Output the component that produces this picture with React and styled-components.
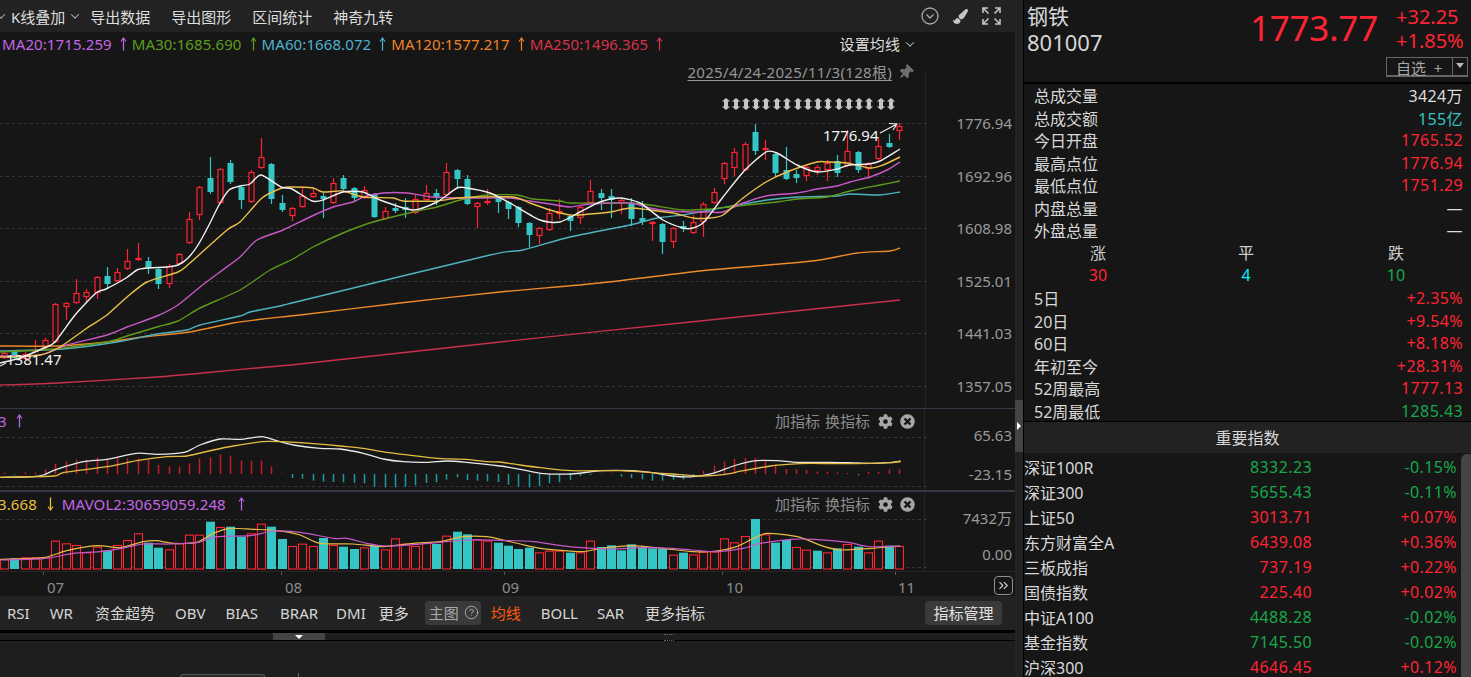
import React from 'react';
import styled, { createGlobalStyle } from 'styled-components';
import { FaCog, FaTimesCircle, FaThumbtack, FaPaintBrush } from 'react-icons/fa';
import { CircleHelp, ChevronsRight } from 'lucide-react';

const RED = '#ff2433';
const GREEN = '#16a84a';
const TEAL = '#35c5c5';
const PANEL = '#161616';
const BAR = '#222222';
const FONT = '"Noto Sans", "Noto Sans CJK SC", sans-serif';

const GlobalStyle = createGlobalStyle`
  html, body { margin: 0; padding: 0; background: ${PANEL}; overflow: hidden; }
  body { font-family: ${FONT}; }
  svg text { font-family: ${FONT}; }
`;

/* ---------- data ---------- */
const barX = (i) => Math.round(4 + i * 10.285);

// [top, bottom, high, low, kind]
const candles = [
  [353,358,352,359,'r'],[352,358,350,359,'t'],[354,359,352,360,'r'],[350,352,340,352,'r'],[340,348,338,349,'r'],
  [304,342,303,343,'r'],[303,307,302,320,'r'],[293,303,279,304,'r'],[292,297,289,303,'r'],[277,293,276,299,'r'],
  [276,284,267,288,'t'],[272,281,268,282,'r'],[261,269,249,270,'r'],[258,260,243,261,'r'],[261,268,257,274,'t'],
  [269,284,268,289,'t'],[266,284,264,288,'r'],[254,264,253,265,'r'],[219,243,212,244,'r'],[187,215,186,220,'r'],
  [178,192,157,194,'t'],[169,203,168,204,'r'],[163,182,160,184,'t'],[187,200,186,209,'t'],[172,202,170,203,'r'],
  [157,168,138,169,'r'],[164,199,163,204,'t'],[203,210,195,212,'t'],[208,216,207,221,'r'],[196,207,188,208,'r'],
  [193,197,187,198,'r'],[196,199,193,218,'t'],[183,203,178,204,'r'],[178,189,175,190,'t'],[188,198,187,202,'t'],
  [190,198,186,199,'r'],[194,217,193,218,'t'],[211,219,207,220,'r'],[208,211,203,213,'t'],[207,210,198,218,'t'],
  [199,213,195,214,'r'],[193,200,185,201,'r'],[193,198,189,205,'t'],[172,195,163,196,'r'],[170,179,169,188,'t'],
  [179,204,175,205,'t'],[203,207,202,228,'r'],[201,203,189,205,'r'],[197,202,196,213,'t'],[202,209,201,219,'t'],
  [207,223,206,227,'t'],[223,235,222,247,'t'],[228,236,227,244,'r'],[213,230,208,231,'r'],[211,214,199,219,'r'],
  [216,221,215,231,'t'],[207,218,206,224,'r'],[191,203,180,204,'r'],[193,198,189,210,'t'],[196,200,189,218,'t'],
  [200,203,197,214,'r'],[203,219,198,226,'t'],[218,222,201,225,'t'],[222,224,221,241,'r'],[224,242,223,254,'t'],
  [228,242,227,248,'r'],[226,229,221,232,'t'],[222,233,215,234,'r'],[204,222,202,237,'r'],[192,203,188,204,'r'],
  [163,179,162,184,'r'],[152,168,148,176,'r'],[144,170,142,171,'r'],[132,151,124,155,'t'],[148,150,140,160,'r'],
  [154,173,153,176,'t'],[170,179,147,180,'t'],[174,178,170,183,'t'],[167,176,166,181,'r'],[167,171,165,175,'r'],
  [163,170,160,181,'r'],[161,173,155,177,'t'],[151,166,130,167,'r'],[152,170,151,173,'t'],[163,169,162,179,'r'],
  [146,159,137,160,'r'],[143,147,134,148,'t'],[126,131,123,140,'r'],
];

const maLines = [
  { color: '#ed8a2a', points: [[0,346],[57,346],[107,342],[143,337],[190,332],[233,323],[263,319],[300,315],[400,303],[500,292],[600,283],[700,271],[780,264],[820,260],[857,253],[890,251],[900,248]] },
  { color: '#c8304c', points: [[0,385],[57,383],[157,377],[213,372],[267,367],[300,364],[500,342],[700,321],[900,300]] },
  { color: '#4fb3bf', points: [[0,351],[63,349],[117,342],[157,334],[187,330],[200,325],[240,316],[250,312],[280,306],[300,301],[490,255],[523,250],[570,237],[630,225],[657,218],[683,215],[700,212],[737,205],[767,200],[797,197],[837,196],[850,194],[880,195],[900,192]] },
  { color: '#5f9a1a', points: [[0,352],[40,350],[63,348],[107,342],[127,336],[157,327],[178,321],[200,308],[240,290],[270,270],[293,259],[313,247],[343,233],[373,222],[413,212],[437,207],[460,200],[487,195],[517,195],[533,199],[560,201],[570,203],[610,203],[630,203],[650,205],[683,210],[710,209],[737,206],[777,202],[797,199],[827,197],[850,191],[880,185],[900,181]] },
  { color: '#c858c8', points: [[0,356],[40,355],[67,345],[107,335],[127,327],[157,316],[178,305],[200,287],[220,272],[240,257],[257,240],[283,230],[310,217],[333,207],[353,202],[363,197],[383,193],[407,193],[433,197],[467,198],[510,198],[530,201],[550,204],[570,207],[590,204],[630,203],[650,208],[670,211],[690,212],[710,212],[723,212],[743,203],[766,196],[797,193],[817,189],[837,186],[850,182],[870,177],[887,170],[900,162]] },
  { color: '#eec04a', points: [[0,357],[40,355],[60,347],[87,328],[107,315],[127,297],[147,282],[178,272],[190,263],[227,230],[240,222],[262,198],[282,188],[292,187],[313,188],[323,192],[343,191],[363,197],[393,198],[403,201],[437,201],[457,198],[477,197],[513,197],[530,203],[550,210],[570,215],[590,214],[610,212],[630,208],[650,210],[673,213],[693,218],[710,218],[723,215],[743,198],[766,182],[787,172],[817,162],[827,162],[847,163],[870,168],[883,165],[900,157]] },
  { color: '#f0f0f0', points: [[0,363],[20,358],[44,348],[55,342],[75,315],[96,293],[106,289],[126,278],[137,270],[147,268],[167,267],[178,265],[188,258],[198,245],[209,225],[219,205],[229,190],[240,186],[250,184],[261,175],[281,187],[292,189],[312,201],[323,200],[343,192],[363,192],[380,200],[413,210],[437,202],[457,188],[467,188],[490,193],[510,203],[540,220],[560,222],[580,212],[600,202],[620,198],[640,203],[663,220],[683,228],[693,228],[704,222],[723,197],[745,170],[766,152],[777,153],[797,165],[817,172],[837,169],[849,165],[869,164],[880,161],[900,149]] },
];

const macdHeights = [4,-2,5,4,14,30,37,43,43,50,46,47,47,47,42,27,23,22,32,47,50,58,55,40,40,40,22,2,-12,-14,-20,-23,-24,-25,-26,-28,-38,-40,-40,-38,-34,-27,-25,-17,-10,-18,-20,-22,-24,-32,-38,-40,-36,-28,-25,-18,-6,-3,2,2,-8,-12,-16,-20,-20,-17,-16,-4,10,25,38,45,48,48,40,28,15,14,12,7,6,5,3,-4,6,6,14,14].slice(0, 88);

const fromZoom5 = (list) => list.map(([x, y]) => [x / 3, 400 + y / 3]);
const fromZoom6 = (list) => list.map(([x, y]) => [500 + x / 2.958, 400 + y / 3]);

const macdWhite = [...fromZoom5([[0,232],[100,230],[130,225],[170,208],[250,185],[320,178],[410,160],[470,163],[530,160],[560,155],[600,135],[660,117],[720,118],[785,110],[830,122],[880,135],[960,145],[1020,147],[1090,160],[1150,177],[1210,185],[1280,187],[1340,183],[1400,187]]),
  ...fromZoom6([[0,198],[60,208],[120,220],[210,222],[300,212],[390,212],[450,218],[510,228],[570,230],[630,220],[700,195],[760,182],[820,182],[880,187],[970,187],[1030,188],[1100,190],[1150,188],[1185,183]])];
const macdYellow = [...fromZoom5([[0,232],[160,228],[190,218],[320,200],[410,182],[500,170],[560,168],[640,150],[700,138],[785,125],[840,125],[940,131],[1020,138],[1090,145],[1160,157],[1240,167],[1310,175],[1400,178],[1460,185]]),
  ...fromZoom6([[0,186],[60,195],[120,203],[210,212],[300,212],[360,212],[450,218],[510,222],[590,228],[660,224],[720,212],[800,198],[850,193],[920,190],[1000,191],[1100,190],[1150,188],[1185,185]])];

const volBars = [
  [477,'r'],[475,'t'],[472,'r'],[472,'r'],[472,'r'],[422,'r'],[430,'r'],[435,'r'],[457,'r'],[440,'r'],[452,'t'],[435,'r'],[420,'r'],[400,'r'],[428,'t'],[443,'t'],[448,'r'],[430,'r'],[404,'r'],[404,'r'],
  [365,'t'],[381,'r'],[380,'t'],[410,'t'],[400,'r'],[371,'r'],[380,'t'],[417,'t'],[438,'r'],[431,'r'],[438,'r'],[414,'t'],[435,'r'],[440,'t'],[447,'t'],[442,'r'],[435,'t'],[448,'r'],[415,'r'],[431,'r'],
  [438,'r'],[427,'r'],[432,'t'],[407,'r'],[395,'t'],[403,'t'],[418,'r'],[422,'r'],[428,'t'],
  [437,'t'],[447,'t'],[443,'t'],[457,'r'],[452,'r'],[452,'r'],[458,'t'],[457,'r'],[422,'r'],[441,'t'],[436,'t'],[451,'t'],[433,'t'],[441,'t'],[445,'t'],[446,'t'],[464,'r'],[458,'t'],[463,'r'],[455,'r'],
  [455,'r'],[415,'r'],[427,'r'],[408,'r'],[357,'t'],[403,'r'],[428,'t'],[420,'t'],[441,'r'],[449,'r'],[452,'t'],[457,'r'],[445,'t'],[432,'r'],[440,'t'],[457,'r'],[422,'r'],[437,'t'],[438,'r'],
];

const volYellow = [...fromZoom5([[0,478],[130,473],[200,452],[290,437],[360,443],[430,425],[470,422],[520,430],[590,427],[640,400],[690,385],[760,388],[830,392],[900,405],[960,430],[1060,432],[1150,440],[1240,430],[1320,425],[1390,410],[1460,410]]),
  ...fromZoom6([[0,418],[60,432],[120,445],[240,455],[300,445],[390,437],[480,445],[570,455],[640,453],[700,440],[750,415],[790,400],[880,410],[960,440],[1010,450],[1100,445],[1184,438]])];
const volMagenta = [...fromZoom5([[0,480],[130,476],[220,460],[300,455],[380,442],[430,432],[510,432],[590,428],[650,410],[750,407],[820,393],[900,397],[1000,415],[1040,415],[1100,430],[1160,438],[1250,433],[1340,425],[1400,420]]),
  ...fromZoom6([[0,421],[100,425],[180,437],[240,443],[330,447],[420,443],[510,445],[570,450],[640,455],[720,445],[770,430],[860,418],[930,418],[1030,427],[1090,440],[1184,438]])];

const signalXs = [726,736,746,756,766,777,787,798,808,818,828,839,849,859,869,881,891];
const mainGrid = [
  { y: 123.5, label: '1776.94' }, { y: 176.5, label: '1692.96' }, { y: 228.5, label: '1608.98' },
  { y: 281.5, label: '1525.01' }, { y: 333.5, label: '1441.03' }, { y: 386.5, label: '1357.05' },
];
const maItems = [
  { text: 'MA20:1715.259', color: '#c466e6' },
  { text: 'MA30:1685.690', color: '#5c9e1c' },
  { text: 'MA60:1668.072', color: '#4fb0cf' },
  { text: 'MA120:1577.217', color: '#ef8226' },
  { text: 'MA250:1496.365', color: '#d8324a' },
];
const menu = ['导出数据', '导出图形', '区间统计', '神奇九转'];
const tabsA = [['RSI', 20], ['WR', 22], ['资金超势', 20], ['OBV', 20], ['BIAS', 22], ['BRAR', 18], ['DMI', 13], ['更多', 16]];
const tabsB = [['BOLL', 19], ['SAR', 21], ['更多指标', 0]];
const axisLabels = [['07', 47], ['08', 285], ['09', 502], ['10', 726], ['11', 898]];
const statsA = [
  ['总成交量', '3424万', '#dddddd'], ['总成交额', '155亿', TEAL], ['今日开盘', '1765.52', RED],
  ['最高点位', '1776.94', RED], ['最低点位', '1751.29', RED], ['内盘总量', '—', '#dddddd'], ['外盘总量', '—', '#dddddd'],
];
const statsB = [
  ['5日', '+2.35%', RED], ['20日', '+9.54%', RED], ['60日', '+8.18%', RED], ['年初至今', '+28.31%', RED],
  ['52周最高', '1777.13', RED], ['52周最低', '1285.43', GREEN],
];
const breadth = [['涨', '30', RED], ['平', '4', '#00f0ff'], ['跌', '10', GREEN]];
const indices = [
  ['深证100R', '8332.23', '-0.15%', GREEN], ['深证300', '5655.43', '-0.11%', GREEN], ['上证50', '3013.71', '+0.07%', RED],
  ['东方财富全A', '6439.08', '+0.36%', RED], ['三板成指', '737.19', '+0.22%', RED], ['国债指数', '225.40', '+0.02%', RED],
  ['中证A100', '4488.28', '-0.02%', GREEN], ['基金指数', '7145.50', '-0.02%', GREEN], ['沪深300', '4646.45', '+0.12%', RED],
];

/* ---------- styled parts ---------- */
const Page = styled.div`
  display: flex;
  width: 1471px;
  height: 677px;
  overflow: hidden;
  background: ${PANEL};
`;
const ChartColumn = styled.div`
  display: flex;
  flex-direction: column;
  width: 1015px;
  flex: none;
  background: ${PANEL};
`;
const Toolbar = styled.div`
  display: flex;
  align-items: center;
  height: 32px;
  flex: none;
  padding: 0 14px 0 0;
  background: ${BAR};
  color: #dddddd;
  font-size: 15px;
`;
const Caret = styled.span`
  display: inline-block;
  width: 5px;
  height: 5px;
  margin: ${(p) => p.$margin || '0'};
  border-right: 1.3px solid #b5b5b5;
  border-bottom: 1.3px solid #b5b5b5;
  transform: rotate(45deg) translate(-1px, -1px);
`;
const MenuItem = styled.span`
  margin-right: 21px;
  white-space: nowrap;
`;
const ToolIcons = styled.div`
  display: flex;
  align-items: center;
  gap: 14px;
  margin-left: auto;
  color: #a8a8a8;
`;
const MaRow = styled.div`
  display: flex;
  align-items: center;
  height: 26px;
  flex: none;
  box-sizing: border-box;
  padding: 0 102px 3px 2px;
  font-size: 15px;
  letter-spacing: 0.1px;
`;
const MaItem = styled.span`
  display: inline-flex;
  align-items: center;
  margin-right: 2.5px;
  color: ${(p) => p.$color};
  white-space: nowrap;
`;
const MaArrow = styled.svg`
  display: block;
  width: 7px;
  height: 14px;
  margin: 0 ${(p) => p.$gap || '2.5px'} 0 ${(p) => p.$lead || '8px'};
  flex: none;
`;
const SetMa = styled.span`
  display: inline-flex;
  align-items: center;
  margin-left: auto;
  color: #dddddd;
  white-space: nowrap;
`;
const PlotArea = styled.div`
  position: relative;
  height: ${(p) => p.$h}px;
  flex: none;
  border-top: ${(p) => p.$border || '0'};
  box-sizing: border-box;
`;
const PlotSvg = styled.svg`
  display: block;
  position: absolute;
  left: 0;
  top: 0;
`;
const DateRange = styled.div`
  position: absolute;
  right: 102px;
  top: 5px;
  display: flex;
  align-items: center;
  gap: 6px;
  color: #959595;
  font-size: 15px;
  line-height: 19px;
`;
const DateText = styled.span`
  text-decoration: underline;
  text-underline-offset: 2px;
  letter-spacing: 0.3px;
`;
const PanelTools = styled.div`
  position: absolute;
  right: 100px;
  top: ${(p) => p.$top}px;
  display: flex;
  align-items: center;
  color: #8c8c8c;
  font-size: 15px;
  line-height: 18px;
`;
const ToolLabel = styled.span`
  margin-right: 5px;
`;
const ToolGlyph = styled.span`
  display: inline-flex;
  margin-left: ${(p) => p.$gap || 0}px;
  color: #a6a6a6;
`;
const PanelLegend = styled.div`
  position: absolute;
  left: ${(p) => p.$left || 0}px;
  top: ${(p) => p.$top}px;
  display: flex;
  align-items: center;
  font-size: 15px;
  line-height: 18px;
  letter-spacing: 0.1px;
  white-space: nowrap;
`;
const LegendText = styled.span`
  color: ${(p) => p.$color};
`;
const AxisBar = styled.div`
  position: relative;
  height: 25px;
  flex: none;
  border-top: 1px solid #262626;
  box-sizing: border-box;
`;
const AxisTick = styled.span`
  position: absolute;
  left: ${(p) => p.$x}px;
  top: 0;
  width: 1px;
  height: 3px;
  background: #555;
`;
const AxisLabel = styled.span`
  position: absolute;
  left: ${(p) => p.$x}px;
  top: 6px;
  color: #8c8c8c;
  font-size: 15px;
  line-height: 18px;
`;
const ExpandButton = styled.div`
  position: absolute;
  right: 2px;
  top: 4px;
  width: 19px;
  height: 19px;
  display: flex;
  align-items: center;
  justify-content: center;
  border: 1.5px solid #8f8f8f;
  border-radius: 4px;
  box-sizing: border-box;
  color: #d0d0d0;
`;
const Tabs = styled.div`
  display: flex;
  align-items: center;
  height: 34px;
  flex: none;
  box-sizing: border-box;
  padding: 0 13px 1px 7px;
  background: ${BAR};
  color: #d6d6d6;
  font-size: 15px;
`;
const Tab = styled.span`
  margin-right: ${(p) => p.$gap ?? 20}px;
  color: ${(p) => p.$color || 'inherit'};
  white-space: nowrap;
`;
const ChipGroup = styled.span`
  display: inline-flex;
  align-items: center;
  gap: 5px;
  height: 24px;
  padding: 0 2px 0 4px;
  margin: 0 10px 0 0;
  border-radius: 4px;
  background: #3a3a3a;
  color: #a9a9a9;
`;
const ManageButton = styled.span`
  display: inline-flex;
  align-items: center;
  justify-content: center;
  width: 77px;
  height: 24px;
  margin-left: auto;
  border-radius: 4px;
  background: #3a3a3a;
  color: #e2e2e2;
`;
const Splitter = styled.div`
  position: relative;
  height: 11px;
  flex: none;
  box-sizing: border-box;
  background: #1e1e1e;
  border-top: 3px solid #000;
  border-bottom: 1px solid #000;
`;
const SplitHandle = styled.div`
  position: absolute;
  left: 273px;
  top: 0;
  width: 52px;
  height: 7px;
  display: flex;
  align-items: center;
  justify-content: center;
  background: #444;
`;
const SplitTriangle = styled.span`
  width: 0;
  height: 0;
  border-left: 4px solid transparent;
  border-right: 4px solid transparent;
  border-top: 4px solid #fff;
`;
const Grip = styled.div`
  position: absolute;
  left: 664px;
  top: 1px;
  width: 10px;
  height: 5px;
  border-top: 1px dotted #666;
  border-bottom: 1px dotted #666;
`;
const FooterArea = styled.div`
  position: relative;
  flex: 1;
  background: #1e1e1e;
`;
const FooterTab = styled.div`
  position: absolute;
  left: 180px;
  bottom: 0;
  width: 85px;
  height: 3px;
  border: 1px solid #555;
  border-bottom: 0;
  border-radius: 3px 3px 0 0;
  box-sizing: border-box;
  background: #2a2a2a;
`;
const FooterDivider = styled.div`
  position: absolute;
  left: 298px;
  bottom: 0;
  width: 1px;
  height: 4px;
  background: #666;
`;
const Gutter = styled.div`
  position: relative;
  width: 8px;
  flex: none;
  background: ${BAR};
  border-right: 1px solid #000;
`;
const GutterThumb = styled.div`
  position: absolute;
  left: 0;
  top: 400px;
  width: 8px;
  height: 52px;
  display: flex;
  align-items: center;
  background: #444;
`;
const GutterTriangle = styled.span`
  margin-left: 2px;
  width: 0;
  height: 0;
  border-top: 4px solid transparent;
  border-bottom: 4px solid transparent;
  border-left: 4px solid #fff;
`;
const SidePanel = styled.div`
  display: flex;
  flex-direction: column;
  flex: 1;
  min-width: 0;
  background: ${PANEL};
`;
const Quote = styled.div`
  position: relative;
  display: flex;
  height: 84px;
  flex: none;
  box-sizing: border-box;
  padding: 0 0 0 3px;
  border-bottom: 2px solid #000;
`;
const QuoteName = styled.div`
  display: flex;
  flex-direction: column;
  color: #d8d8d8;
  font-size: 21px;
  line-height: 26px;
  padding-top: 3px;
`;
const QuoteCode = styled.span`
  font-size: 22px;
`;
const QuotePrice = styled.div`
  margin: 0 0 0 auto;
  color: ${RED};
  font-size: 35px;
  line-height: 56px;
  letter-spacing: -0.2px;
`;
const QuoteChange = styled.div`
  width: 75px;
  margin: 5px 0 0 18px;
  color: ${RED};
  font-size: 20px;
  line-height: 24px;
`;
const WatchButton = styled.div`
  position: absolute;
  right: 3px;
  top: 57px;
  display: flex;
  width: 82px;
  height: 20px;
  box-sizing: border-box;
  border: 1px solid #666;
  border-bottom-width: 2px;
  color: #a8a8a8;
  font-size: 15px;
  line-height: 20px;
`;
const WatchLabel = styled.span`
  flex: 1;
  padding-left: 9px;
  white-space: pre;
  border-right: 1px solid #666;
`;
const WatchCaret = styled.span`
  width: 14px;
  display: flex;
  justify-content: center;
  padding-top: 5px;
  box-sizing: border-box;
  &::before {
    content: '';
    width: 0;
    height: 0;
    border-left: 4px solid transparent;
    border-right: 4px solid transparent;
    border-top: 5px solid #bbb;
  }
`;
const StatList = styled.div`
  display: flex;
  flex-direction: column;
  flex: none;
`;
const StatRow = styled.div`
  display: flex;
  justify-content: space-between;
  align-items: center;
  height: 22.5px;
  padding: 0 8px 0 10px;
  color: #d8d8d8;
  font-size: 16px;
`;
const StatValue = styled.span`
  color: ${(p) => p.$color};
  letter-spacing: 0.4px;
`;
const BreadthGrid = styled.div`
  display: grid;
  grid-template-columns: 148px 150px 1fr;
  flex: none;
`;
const BreadthCell = styled.div`
  display: flex;
  flex-direction: column;
  align-items: center;
  width: 148px;
  font-size: 16px;
  line-height: 22.75px;
  color: #d0d0d0;
`;
const BreadthValue = styled.span`
  color: ${(p) => p.$color};
`;
const SectionTitle = styled.div`
  height: 32px;
  flex: none;
  margin-top: -1px;
  box-sizing: border-box;
  border-top: 1px solid #000;
  background: ${BAR};
  color: #d8d8d8;
  font-size: 16px;
  line-height: 32px;
  text-align: center;
`;
const IndexArea = styled.div`
  position: relative;
  flex: 1;
  overflow: hidden;
  padding-top: 1px;
`;
const IndexRow = styled.div`
  display: grid;
  grid-template-columns: 1fr 100px 145px;
  align-items: center;
  height: 25px;
  padding-right: 14px;
  color: #d8d8d8;
  font-size: 16px;
`;
const IndexCell = styled.span`
  text-align: right;
  color: ${(p) => p.$color};
  letter-spacing: 0.4px;
`;
const SideThumb = styled.div`
  position: absolute;
  top: 1px;
  right: -4px;
  width: 14px;
  height: 300px;
  border-radius: 6px;
  background: #444;
`;

/* ---------- drawings ---------- */
const toSmooth = (pts) => {
  let d = `M${pts[0][0]} ${pts[0][1]}`;
  for (let i = 0; i < pts.length - 1; i += 1) {
    const p0 = pts[i - 1] || pts[i];
    const p1 = pts[i];
    const p2 = pts[i + 1];
    const p3 = pts[i + 2] || p2;
    const k = 0.12;
    const c1x = p1[0] + (p2[0] - p0[0]) * k;
    const c1y = p1[1] + (p2[1] - p0[1]) * k;
    const c2x = p2[0] - (p3[0] - p1[0]) * k;
    const c2y = p2[1] - (p3[1] - p1[1]) * k;
    d += `C${c1x.toFixed(1)} ${c1y.toFixed(1)} ${c2x.toFixed(1)} ${c2y.toFixed(1)} ${p2[0]} ${p2[1]}`;
  }
  return d;
};

const Arrow = ({ color, gap, lead }) => (
  <MaArrow viewBox="0 0 7 14" $gap={gap} $lead={lead}>
    <path d="M3.5 1.5V13.5" stroke={color} strokeWidth="1.3" fill="none" />
    <path d="M1 4.5L3.5 1L6 4.5" stroke={color} strokeWidth="1.1" fill="none" />
  </MaArrow>
);

const DownArrow = ({ color, gap, lead }) => (
  <MaArrow viewBox="0 0 7 14" $gap={gap} $lead={lead}>
    <path d="M3.5 .5V12.5" stroke={color} strokeWidth="1.3" fill="none" />
    <path d="M1 9.5L3.5 13L6 9.5" stroke={color} strokeWidth="1.1" fill="none" />
  </MaArrow>
);

const CircleDown = () => (
  <svg width="18" height="18" viewBox="0 0 18 18" fill="none" stroke="#a8a8a8" strokeWidth="1.3">
    <circle cx="9" cy="9" r="8" />
    <path d="M5.5 7.5L9 11L12.5 7.5" />
  </svg>
);

const FullScreen = () => (
  <svg width="19" height="18" viewBox="0 0 19 18" fill="none" stroke="#c4c4c4" strokeWidth="1.6">
    <path d="M1 6V1H6M1 1L6.5 6.5" />
    <path d="M13 1H18V6M18 1L12.5 6.5" />
    <path d="M1 12V17H6M1 17L6.5 11.5" />
    <path d="M13 17H18V12M18 17L12.5 11.5" />
  </svg>
);

const Signal = ({ x }) => (
  <path d={`M${x} 98l4.2 3.5h-2.2v5h2.2l-4.2 3.5l-4.2-3.5h2.2v-5h-2.2z`} fill="#c6c6c6" />
);

const Candle = ({ i, c }) => {
  const [top, bottom, high, low, kind] = c;
  const x = barX(i) + 0.5;
  if (kind === 't') {
    return (
      <g>
        <line x1={x} x2={x} y1={high} y2={low} stroke={TEAL} strokeWidth="1.2" />
        <rect x={x - 3} y={top} width="6" height={bottom - top} fill={TEAL} />
      </g>
    );
  }
  return (
    <g stroke={RED} strokeWidth="1.2">
      <line x1={x} x2={x} y1={high} y2={top} />
      <line x1={x} x2={x} y1={bottom} y2={low} />
      <rect x={x - 2.5} y={top + 0.5} width="5" height={Math.max(bottom - top - 1, 1)} fill={PANEL} />
    </g>
  );
};

const MainChart = () => (
  <PlotArea $h={350}>
    <PlotSvg width="1015" height="350" viewBox="0 58 1015 350">
      <line x1="925.5" x2="925.5" y1="70" y2="408" stroke="#242424" />
      {mainGrid.map((g) => (
        <line key={g.y} x1="0" x2="930" y1={g.y} y2={g.y} stroke="#34353d" strokeDasharray="3 3" />
      ))}
      {mainGrid.map((g) => (
        <text key={g.label} x="1012" y={g.y + 5} textAnchor="end" fill="#9a9a9a" fontSize="15">{g.label}</text>
      ))}
      {candles.map((c, i) => <Candle key={i} i={i} c={c} />)}
      {maLines.map((l) => (
        <path key={l.color} d={toSmooth(l.points)} fill="none" stroke={l.color} strokeWidth="1.4" strokeLinejoin="round" />
      ))}
      {signalXs.map((x) => <Signal key={x} x={x} />)}
      <text x="823" y="141" fill="#f2f2f2" fontSize="15">1776.94</text>
      <path d="M880 133L897 124M889 123.5L897 124L893 130" fill="none" stroke="#f2f2f2" strokeWidth="1.1" />
      <text x="6" y="365" fill="#f2f2f2" fontSize="15">1381.47</text>
      <path d="M0 366L6 363" fill="none" stroke="#f2f2f2" strokeWidth="1.1" />
    </PlotSvg>
    <DateRange>
      <DateText>2025/4/24-2025/11/3(128根)</DateText>
      <FaThumbtack size={15} color="#6e6e6e" style={{ transform: 'rotate(45deg)' }} />
    </DateRange>
  </PlotArea>
);

const PanelToolset = () => (
  <PanelTools $top={3}>
    <ToolLabel>加指标</ToolLabel>
    <span>换指标</span>
    <ToolGlyph $gap={8}><FaCog size={15} /></ToolGlyph>
    <ToolGlyph $gap={7}><FaTimesCircle size={15} /></ToolGlyph>
  </PanelTools>
);

const MacdChart = () => (
  <PlotArea $h={82} $border="1px solid #333a45">
    <PlotSvg width="1015" height="81" viewBox="0 409 1015 81">
      <line x1="924.5" x2="924.5" y1="409" y2="490" stroke="#242424" />
      {[437.5, 486.5].map((y) => (
        <line key={y} x1="0" x2="930" y1={y} y2={y} stroke="#34353d" strokeDasharray="3 3" />
      ))}
      {macdHeights.map((h, i) => {
        const x = barX(i) + 0.5;
        const base = 474;
        return (
          <line key={i} x1={x} x2={x} y1={base} y2={base - h / 3} stroke={h >= 0 ? '#c41e2c' : '#1f9a9d'} strokeWidth="1.5" />
        );
      })}
      <path d={toSmooth(macdWhite)} fill="none" stroke="#e8e8e8" strokeWidth="1.3" />
      <path d={toSmooth(macdYellow)} fill="none" stroke="#e6bc42" strokeWidth="1.3" />
      <text x="1012" y="441" textAnchor="end" fill="#9a9a9a" fontSize="15">65.63</text>
      <text x="1012" y="480" textAnchor="end" fill="#9a9a9a" fontSize="15">-23.15</text>
    </PlotSvg>
    <PanelLegend $top={3} $left={-2}>
      <LegendText $color="#c466e6">3</LegendText>
      <Arrow color="#b06ae8" lead="9px" />
    </PanelLegend>
    <PanelToolset />
  </PlotArea>
);

const VolumeChart = () => (
  <PlotArea $h={81} $border="2px solid #333a45">
    <PlotSvg width="1015" height="79" viewBox="0 492 1015 79">
      <line x1="924.5" x2="924.5" y1="492" y2="571" stroke="#242424" />
      {[519.5, 567.5].map((y) => (
        <line key={y} x1="0" x2="930" y1={y} y2={y} stroke="#34353d" strokeDasharray="3 3" />
      ))}
      {volBars.map(([topRaw, kind], i) => {
        const x = barX(i) + 0.5;
        const top = 400 + topRaw / 3;
        return kind === 't' ? (
          <rect key={i} x={x - 4.5} y={top} width="9" height={569 - top} fill={TEAL} />
        ) : (
          <rect key={i} x={x - 4} y={top + 0.5} width="8" height={568.5 - top} fill={PANEL} stroke={RED} strokeWidth="1.1" />
        );
      })}
      <path d={toSmooth(volYellow)} fill="none" stroke="#e6bc42" strokeWidth="1.2" />
      <path d={toSmooth(volMagenta)} fill="none" stroke="#c858c8" strokeWidth="1.2" />
      <text x="1012" y="524" textAnchor="end" fill="#9a9a9a" fontSize="15">7432万</text>
      <text x="1012" y="560" textAnchor="end" fill="#9a9a9a" fontSize="15">0.00</text>
    </PlotSvg>
    <PanelLegend $top={3} $left={-2}>
      <LegendText $color="#e8c040">3.668</LegendText>
      <DownArrow color="#e8c040" gap="8px" lead="10px" />
      <LegendText $color="#c466e6">MAVOL2:30659059.248</LegendText>
      <Arrow color="#b06ae8" lead="12px" />
    </PanelLegend>
    <PanelToolset />
  </PlotArea>
);

const TimeAxis = () => (
  <AxisBar>
    {[43, 281, 504, 722, 895].map((x) => <AxisTick key={x} $x={x} />)}
    {axisLabels.map(([t, x]) => <AxisLabel key={t} $x={x}>{t}</AxisLabel>)}
    <ExpandButton><ChevronsRight size={15} strokeWidth={1.8} /></ExpandButton>
  </AxisBar>
);

export default function App() {
  return (
    <Page>
      <GlobalStyle />
      <ChartColumn>
        <Toolbar>
          <Caret $margin="0 7px 0 -2px" />
          <span>K线叠加</span>
          <Caret $margin="0 12px 0 7px" />
          {menu.map((m) => <MenuItem key={m}>{m}</MenuItem>)}
          <ToolIcons>
            <CircleDown />
            <FaPaintBrush size={15} color="#c4c4c4" />
            <FullScreen />
          </ToolIcons>
        </Toolbar>
        <MaRow>
          {maItems.map((m) => (
            <MaItem key={m.text} $color={m.color}>
              {m.text}
              <Arrow color={m.color} />
            </MaItem>
          ))}
          <SetMa>设置均线<Caret $margin="0 0 0 7px" /></SetMa>
        </MaRow>
        <MainChart />
        <MacdChart />
        <VolumeChart />
        <TimeAxis />
        <Tabs>
          {tabsA.map(([t, gap]) => <Tab key={t} $gap={gap}>{t}</Tab>)}
          <ChipGroup>主图<CircleHelp size={15} strokeWidth={1.5} /></ChipGroup>
          <Tab $color="#ff5a10">均线</Tab>
          {tabsB.map(([t, gap]) => <Tab key={t} $gap={gap}>{t}</Tab>)}
          <ManageButton>指标管理</ManageButton>
        </Tabs>
        <Splitter>
          <SplitHandle><SplitTriangle /></SplitHandle>
          <Grip />
        </Splitter>
        <FooterArea>
          <FooterTab />
          <FooterDivider />
        </FooterArea>
      </ChartColumn>
      <Gutter>
        <GutterThumb><GutterTriangle /></GutterThumb>
      </Gutter>
      <SidePanel>
        <Quote>
          <QuoteName>
            <span>钢铁</span>
            <QuoteCode>801007</QuoteCode>
          </QuoteName>
          <QuotePrice>1773.77</QuotePrice>
          <QuoteChange>
            <div>+32.25</div>
            <div>+1.85%</div>
          </QuoteChange>
          <WatchButton>
            <WatchLabel>自选  +</WatchLabel>
            <WatchCaret />
          </WatchButton>
        </Quote>
        <StatList>
          {statsA.map(([k, v, c]) => (
            <StatRow key={k}><span>{k}</span><StatValue $color={c}>{v}</StatValue></StatRow>
          ))}
        </StatList>
        <BreadthGrid>
          {breadth.map(([k, v, c]) => (
            <BreadthCell key={k}>
              <span>{k}</span>
              <BreadthValue $color={c}>{v}</BreadthValue>
            </BreadthCell>
          ))}
        </BreadthGrid>
        <StatList>
          {statsB.map(([k, v, c]) => (
            <StatRow key={k}><span>{k}</span><StatValue $color={c}>{v}</StatValue></StatRow>
          ))}
        </StatList>
        <SectionTitle>重要指数</SectionTitle>
        <IndexArea>
          {indices.map(([name, price, pct, color]) => (
            <IndexRow key={name}>
              <span>{name}</span>
              <IndexCell $color={color}>{price}</IndexCell>
              <IndexCell $color={color}>{pct}</IndexCell>
            </IndexRow>
          ))}
          <SideThumb />
        </IndexArea>
      </SidePanel>
    </Page>
  );
}
